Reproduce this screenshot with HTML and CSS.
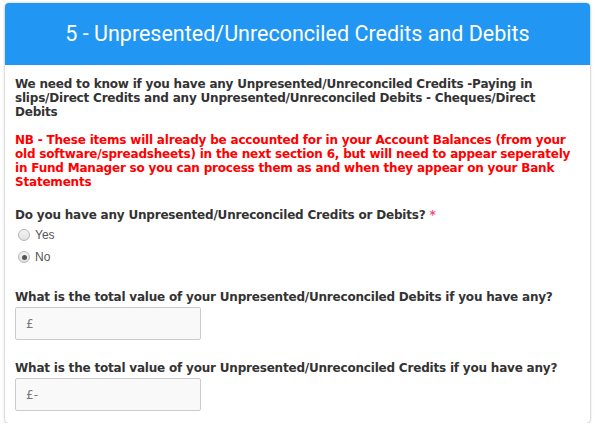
FILE: index.html
```html
<!DOCTYPE html>
<html>
<head>
<meta charset="utf-8">
<link rel="stylesheet" href="styles.css">
</head>
<body>
<div class="card">
  <div class="header">5 - Unpresented/Unreconciled Credits and Debits</div>
  <div class="body">
    <p class="intro">We need to know if you have any Unpresented/Unreconciled Credits -Paying in slips/Direct Credits and any Unpresented/Unreconciled Debits - Cheques/Direct Debits</p>
    <p class="note">NB - These items will already be accounted for in your Account Balances (from your old software/spreadsheets) in the next section 6, but will need to appear seperately in Fund Manager so you can process them as and when they appear on your Bank Statements</p>
    <div class="field">
      <div class="label">Do you have any Unpresented/Unreconciled Credits or Debits? <span class="req">*</span></div>
      <div class="options">
        <div class="option"><span class="radio"></span><span>Yes</span></div>
        <div class="option"><span class="radio checked"></span><span>No</span></div>
      </div>
    </div>
    <div class="field field-after-options">
      <div class="label">What is the total value of your Unpresented/Unreconciled Debits if you have any?</div>
      <div class="input"><span>£</span></div>
    </div>
    <div class="field field-after-input">
      <div class="label">What is the total value of your Unpresented/Unreconciled Credits if you have any?</div>
      <div class="input"><span>£-</span></div>
    </div>
  </div>
</div>
</body>
</html>
```
FILE: styles.css
```css
html, body { margin: 0; padding: 0; background: #fff; }
body { padding: 3px 5px 0 5px; }
.card {
  width: 585px;
  height: 420px;
  box-sizing: border-box;
  background: #fff;
  border-radius: 4px;
  box-shadow: 0 0 3px rgba(0,0,0,0.25), 0 1px 2px rgba(0,0,0,0.15);
  overflow: hidden;
}
.header {
  background: #2196f3;
  color: #fff;
  height: 62px;
  display: flex;
  align-items: center;
  justify-content: center;
  font-family: Roboto, "Liberation Sans", sans-serif;
  font-size: 21.5px;
  padding-bottom: 1px;
  box-sizing: border-box;
}
.body {
  padding: 12px 10px 0 10px;
  font-family: "DejaVu Sans", Verdana, sans-serif;
  letter-spacing: -0.2px;
}
p { margin: 0; }
.intro {
  font-size: 12px;
  font-weight: bold;
  line-height: 14px;
  color: #333;
}
.note {
  margin-top: 14px;
  font-size: 12px;
  font-weight: bold;
  line-height: 14px;
  color: #f00;
}
.field { margin-top: 19px; }
.field-after-options { margin-top: 26px; }
.field-after-input { margin-top: 21px; }
.label {
  font-size: 12px;
  font-weight: bold;
  color: #333;
  line-height: 14px;
}
.req { color: #f0506e; }
.options { margin-top: 6px; display: flex; flex-direction: column; gap: 8px; padding-left: 3px; }
.option {
  display: flex;
  align-items: center;
  gap: 5px;
  font-family: "Liberation Sans", Arial, sans-serif;
  letter-spacing: 0;
  font-size: 12px;
  color: #555;
  height: 14px;
}
.radio {
  width: 10px; height: 10px;
  border: 1px solid #b5b5b5;
  border-radius: 50%;
  background: linear-gradient(#f4f4f4, #e2e2e2);
  position: relative;
}
.radio.checked::after {
  content: "";
  position: absolute;
  left: 2.5px; top: 2.5px;
  width: 5px; height: 5px;
  border-radius: 50%;
  background: #555;
}
.input {
  margin-top: 3px;
  width: 186px;
  height: 33px;
  box-sizing: border-box;
  border: 1px solid #ccc;
  border-radius: 2px;
  background: #f9f9f9;
  display: flex;
  align-items: center;
  padding-left: 10px;
  font-family: "DejaVu Sans", Verdana, sans-serif;
  letter-spacing: 0;
  font-size: 12px;
  color: #777;
}
```
